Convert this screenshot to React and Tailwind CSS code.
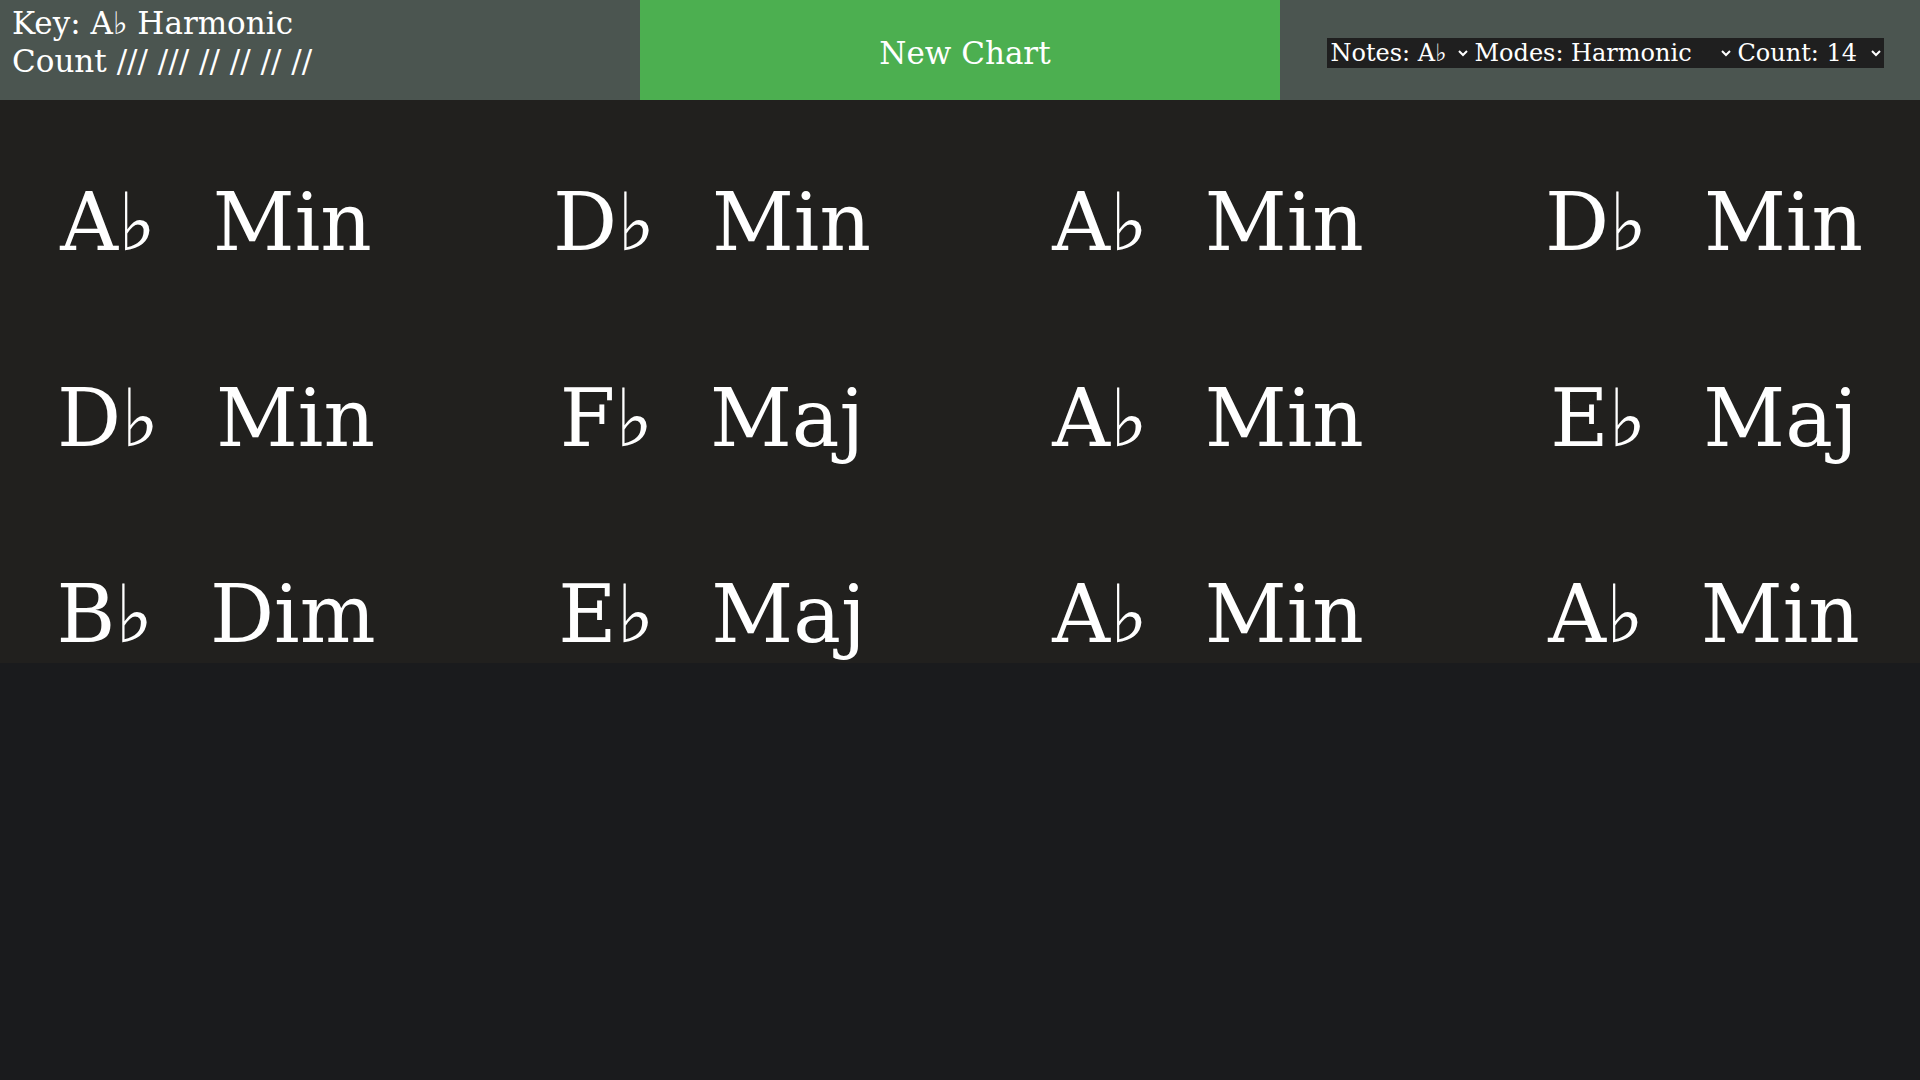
import { useState } from "react";

const chords = [
  ["A♭", "Min"], ["D♭", "Min"], ["A♭", "Min"], ["D♭", "Min"],
  ["D♭", "Min"], ["F♭", "Maj"], ["A♭", "Min"], ["E♭", "Maj"],
  ["B♭", "Dim"], ["E♭", "Maj"], ["A♭", "Min"], ["A♭", "Min"],
];

const serif = { fontFamily: '"DejaVu Serif", serif' };

function App() {
  const [note, setNote] = useState("A♭");
  const [mode, setMode] = useState("Harmonic");
  const [count, setCount] = useState("14");

  return (
    <div className="min-h-screen bg-[#1a1b1d] text-white" style={serif}>
      {/* Header */}
      <div className="grid grid-cols-3 h-[100px]">
        <div className="bg-[#4b5550] px-3 pt-[4px] text-[31px] leading-[38px]">
          <div>Key: {note} {mode}</div>
          <div>Count /// /// // // // //</div>
        </div>

        <button className="bg-[#4caf50] text-[31px] pt-[6px] pl-[10px] cursor-pointer">
          New Chart
        </button>

        <div className="bg-[#4b5550] flex items-center justify-center pt-[6px] pl-[10px]">
          <select
            value={note}
            onChange={(e) => setNote(e.target.value)}
            className="bg-[#1f1f1f] text-white text-[24px] h-[30px] w-[144px] px-0 border-0 outline-none"
          >
            {["A♭", "B♭", "C", "D♭", "E♭", "F", "G"].map((n) => (
              <option key={n} value={n}>Notes: {n}</option>
            ))}
          </select>
          <select
            value={mode}
            onChange={(e) => setMode(e.target.value)}
            className="bg-[#1f1f1f] text-white text-[24px] h-[30px] w-[263px] px-0 border-0 outline-none"
          >
            {["Natural", "Harmonic", "Melodic"].map((m) => (
              <option key={m} value={m}>Modes: {m}</option>
            ))}
          </select>
          <select
            value={count}
            onChange={(e) => setCount(e.target.value)}
            className="bg-[#1f1f1f] text-white text-[24px] h-[30px] w-[150px] px-0 border-0 outline-none"
          >
            {["8", "12", "14", "16"].map((c) => (
              <option key={c} value={c}>Count: {c}</option>
            ))}
          </select>
        </div>
      </div>

      {/* Chart */}
      <div className="bg-[#21201e] grid grid-cols-4 gap-x-16 gap-y-[103px] pt-[76px] pb-[2px]">
        {chords.map(([root, quality], i) => (
          <div key={i} className="flex justify-center items-center gap-[57px] text-[80px] leading-[93px]">
            <span>{root}</span>
            <span>{quality}</span>
          </div>
        ))}
      </div>
    </div>
  );
}

export default App;
